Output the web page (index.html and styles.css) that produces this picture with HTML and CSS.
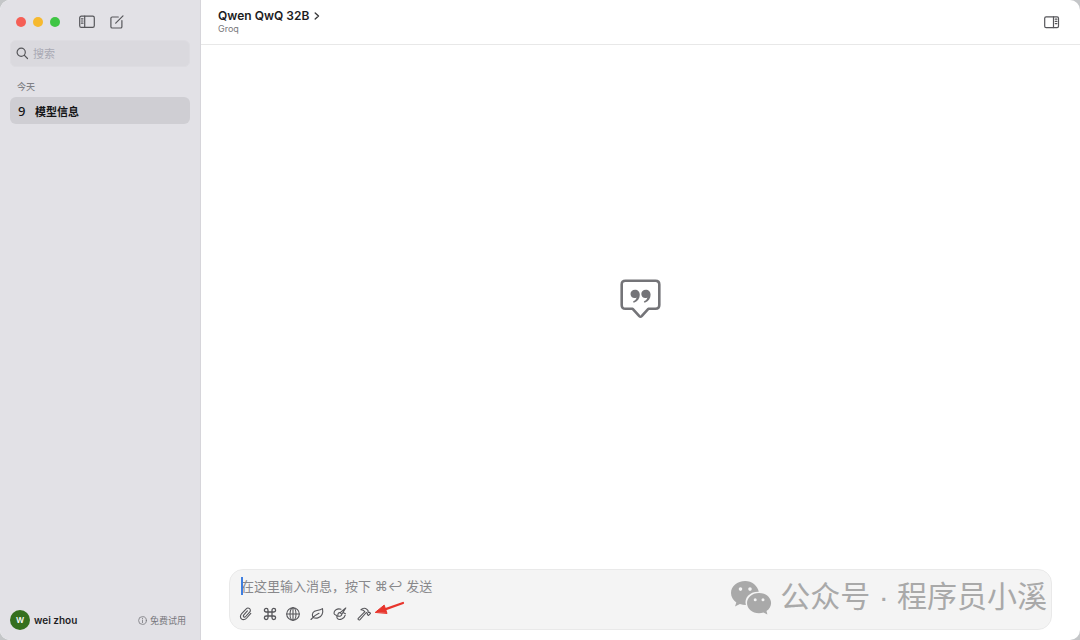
FILE: index.html
```html
<!DOCTYPE html>
<html lang="zh-CN">
<head>
    <meta charset="UTF-8">
    <meta name="viewport" content="width=device-width, initial-scale=1">
    <title>模型信息</title>
    <link rel="stylesheet" href="styles.css">
</head>
<body>
    <div class="window">
        <aside class="sidebar">
            <div class="titlebar">
                <div class="lights">
                    <button class="light red" aria-label="关闭"></button>
                    <button class="light yellow" aria-label="最小化"></button>
                    <button class="light green" aria-label="缩放"></button>
                </div>
                <button class="icon-btn" aria-label="边栏">
                    <svg width="16" height="14" viewBox="0 0 16 14">
                        <rect x="0.7" y="1.2" width="14.6" height="11.2" rx="1.6"/>
                        <path d="M5.7 1.2v11.2M2.4 3.8h1.6M2.4 6h1.6M2.4 8.2h1.6"/>
                    </svg>
                </button>
                <button class="icon-btn" aria-label="新建聊天">
                    <svg width="14" height="14" viewBox="0 0 14 14">
                        <path d="M8.3 2H2.2Q.9 2 .9 3.3v8.400Q.9 13 2.200 13h8.400q1.300 0 1.300-1.300V5.600"/>
                        <path d="M5.700 8.200L13 .9"/>
                    </svg>
                </button>
            </div>

            <label class="search">
                <svg width="13" height="13" viewBox="0 0 13 13">
                    <circle cx="5.2" cy="5.2" r="4.1"/>
                    <path d="M8.2 8.2l3.3 3.3"/>
                </svg>
                <input type="text" placeholder="搜索" aria-label="搜索">
            </label>

            <h2 class="group">今天</h2>
            <nav>
                <a class="chat" href="#"><span class="chat-icon">9</span>模型信息</a>
            </nav>

            <div class="account">
                <span class="avatar">W</span>
                <span class="user">wei zhou</span>
                <button class="trial">
                    <svg width="9" height="9" viewBox="0 0 9 9">
                        <circle cx="4.5" cy="4.5" r="3.9"/>
                        <path d="M4.5 4.1v2.5M4.5 2.2v.5"/>
                    </svg>
                    免费试用
                </button>
            </div>
        </aside>

        <main class="main">
            <header class="header">
                <button class="model">
                    <span class="model-name">Qwen QwQ 32B
                        <svg width="6" height="8" viewBox="0 0 6 8"><path d="M1.2 1l3.3 3-3.3 3"/></svg>
                    </span>
                    <span class="provider">Groq</span>
                </button>
                <button class="icon-btn" aria-label="检查器">
                    <svg width="16" height="14" viewBox="0 0 16 14">
                        <rect x="0.7" y="1.8" width="13.8" height="10.8" rx="1.4"/>
                        <path d="M9.500 1.800v10.800M11.300 4.200h1.600M11.300 6.400h1.600M11.300 8.600h1.600"/>
                    </svg>
                </button>
            </header>

            <section class="empty">
                <svg width="42" height="40" viewBox="0 0 42 40">
                    <path class="bubble" d="M5.500 1.700h30q3.800 0 3.800 3.800v20.500q0 3.800-3.800 3.800h-7.200l-6.600 7.300q-1.200 1.200-2.400 0l-6.600-7.300H5.500q-3.800 0-3.800-3.800V5.500q0-3.800 3.800-3.800z"/>
                    <path class="quote" d="M15 10.700c-2.600 0-4.500 1.800-4.500 4.200 0 2.300 1.800 4.100 4 4.100.8 0 1.500-.2 2.100-.6-.4 1.700-1.500 2.900-2.900 3.500-1.100.5-.6 1.900.7 1.500 3.400-1.100 5.400-4 5.400-7.600 0-3.100-2-5.100-4.800-5.100z"/>
                    <path class="quote" d="M25.800 10.700c-2.600 0-4.500 1.800-4.500 4.200 0 2.300 1.800 4.100 4 4.100.8 0 1.500-.2 2.100-.6-.4 1.700-1.500 2.900-2.900 3.500-1.100.5-.6 1.900.7 1.500 3.400-1.100 5.400-4 5.400-7.600 0-3.100-2-5.100-4.800-5.100z"/>
                </svg>
            </section>

            <form class="composer">
                <div class="field">
                    <input type="text" placeholder="在这里输入消息，按下 ⌘↩ 发送" aria-label="消息">
                </div>
                <div class="tools">
                    <button type="button" class="tool" aria-label="附件">
                        <svg width="14" height="14" viewBox="0 0 14 14"><path d="M11.800 6.300L7.700 11c-1.500 1.700-3.900 2.100-5.300.8-1.400-1.300-1.200-3.500.3-5.100L7 2.100c1-1.100 2.600-1.300 3.600-.4 1 .9 1 2.400 0 3.500L6.700 9.500c-.6.700-1.400.8-2 .3-.5-.5-.4-1.300.1-1.900l3.600-4"/></svg>
                    </button>
                    <button type="button" class="tool" aria-label="快捷指令">
                        <svg width="14" height="14" viewBox="0 0 14 14"><path class="bold" d="M5 5h4v4H5zM5 5H3.200A1.800 1.800 0 1 1 5 3.200zM9 5V3.200A1.800 1.800 0 1 1 10.800 5zM9 9h1.800A1.800 1.800 0 1 1 9 10.800zM5 9v1.800A1.800 1.800 0 1 1 3.200 9z"/></svg>
                    </button>
                    <button type="button" class="tool" aria-label="联网">
                        <svg width="14" height="14" viewBox="0 0 14 14"><circle cx="7" cy="7" r="6.300"/><ellipse cx="7" cy="7" rx="3" ry="6.300"/><path d="M.7 7h12.600M7 .7v12.600"/></svg>
                    </button>
                    <button type="button" class="tool" aria-label="思考">
                        <svg width="14" height="14" viewBox="0 0 14 14"><path d="M1 12.500l2.100-2.100C1.100 6.700 3.300 4 7 3.500c2.500-.3 3.800-.5 5.500-1.900.9 4.100-.6 8.400-4.600 9.300-2 .5-3.600.1-4.800-.5C4.600 8 6.700 7.300 9 6.200"/></svg>
                    </button>
                    <button type="button" class="tool" aria-label="绘图">
                        <svg width="14" height="14" viewBox="0 0 14 14"><path d="M8 2.200C4.100 1 .9 3.400 1 6.200c.1 1.800 1.800 1.500 2.500 2.100.9.800-.2 2.100 1 3.300 1.900 1.900 6.900.3 7.700-3.400M12.800 1L7.200 5.700l1.600 1.600zM7.200 5.700c-1.900-.3-2.600 1.300-2.300 3.400 1.900.3 4-.1 3.900-1.800M10.500 5.700l1.900 1"/></svg>
                    </button>
                    <button type="button" class="tool" aria-label="工具">
                        <svg width="14" height="14" viewBox="0 0 14 14"><path d="M4 2.700C5.900.7 8.300.8 9.900 2.400l1.200 1.300-.1 1.200.7.600 1-.1.800.9-2 2.200-1.100-1V6.400L9.300 5.500 3 12.600q-.8.800-1.600.1t.1-1.600L7.900 4.700C6.900 3.200 5.600 2.700 4 2.700z"/></svg>
                    </button>
                </div>
                <svg class="pointer" width="32" height="16" viewBox="0 0 32 16">
                    <path d="M29 2L11 8.400" />
                    <path class="head" d="M1.500 11.200L10.200 4.100l2.700 8z"/>
                </svg>
            </form>

            <div class="watermark">
                <svg width="42" height="34" viewBox="0 0 42 34">
                    <path fill-rule="evenodd" d="M15.200 1C7.300 1 1 6.300 1 13c0 3.800 2.100 7.200 5.300 9.400L5 26.600l4.900-2.500c1.900.6 3.800.8 6 .8-2-6.800 3.700-13.400 12.900-13.100C27.500 5.600 21.900 1 15.200 1zM10.500 7.300a1.800 1.800 0 1 1 0 3.600 1.800 1.800 0 0 1 0-3.600zM20 7.300a1.800 1.800 0 1 1 0 3.600 1.800 1.800 0 0 1 0-3.600z"/>
                    <path fill-rule="evenodd" d="M29 12.900c-6.800 0-12 4.500-12 10.100s5.200 10.200 12 10.200c1.600 0 3.100-.3 4.500-.7l3.900 2-.9-3.500c2.800-1.900 4.600-4.700 4.600-8 0-5.600-5.400-10.100-12.100-10.100zM25.200 18.200a1.500 1.500 0 1 1 0 3 1.500 1.500 0 0 1 0-3zM33 18.200a1.500 1.500 0 1 1 0 3 1.500 1.500 0 0 1 0-3z"/>
                </svg>
                <span>公众号 · 程序员小溪</span>
            </div>
        </main>
    </div>
</body>
</html>
```
FILE: styles.css
```css
:root {
    --sidebar: #e2e1e6;
    --icon: #56565a;
    --muted: #808085;
}

* {
    box-sizing: border-box;
}

body {
    margin: 0;
    background: #c4c6c8;
    color: #1d1d1f;
    font-family: Inter, "Noto Sans CJK SC", "DejaVu Sans", sans-serif;
    font-size: 11px;
}

button, input {
    padding: 0;
    border: 0;
    outline: 0;
    background: none;
    color: inherit;
    font: inherit;
}

svg {
    display: block;
    flex: none;
    fill: none;
    stroke: var(--icon);
    stroke-width: 1.2;
    stroke-linecap: round;
    stroke-linejoin: round;
}

.window {
    display: flex;
    height: 100vh;
    border-radius: 10px;
    overflow: hidden;
    background: #fff;
}

/* 侧边栏 */
.sidebar {
    display: flex;
    flex-direction: column;
    flex: none;
    width: 201px;
    padding: 0 10px;
    background: var(--sidebar);
    border-right: 1px solid #d6d5da;
}

.titlebar {
    display: flex;
    align-items: center;
    height: 40px;
    padding: 4px 0 0 6px;
    gap: 15px;
}

.lights {
    display: flex;
    gap: 7px;
    margin-right: 4px;
}

.light {
    width: 10px;
    height: 10px;
    border-radius: 50%;
}

.red { background: #f55f56; }
.yellow { background: #f6b92f; }
.green { background: #3fc544; }

.search {
    display: flex;
    align-items: center;
    gap: 4px;
    height: 27px;
    padding: 0 5px;
    border: 1px solid #dddce1;
    border-radius: 6px;
    background: #dad9de;
}

.search input {
    flex: 1;
    min-width: 0;
}

.search input::placeholder {
    color: #a9a9b4;
}

.group {
    margin: 13px 0 3px;
    padding-left: 7px;
    color: var(--muted);
    font-size: 9px;
    font-weight: 500;
    line-height: 14px;
}

.chat {
    display: flex;
    align-items: center;
    height: 27px;
    padding-left: 8px;
    border-radius: 6px;
    background: #cfced3;
    color: #151517;
    font-weight: 700;
    text-decoration: none;
}

.chat-icon {
    width: 17px;
    font-family: "Noto Sans", sans-serif;
    font-size: 13px;
    font-weight: 500;
}

.account {
    display: flex;
    align-items: center;
    margin: auto 0 10px;
}

.avatar {
    width: 20px;
    margin-right: 4px;
    border-radius: 50%;
    background: #35701f;
    color: #fff;
    font-size: 8px;
    font-weight: 600;
    line-height: 20px;
    text-align: center;
}

.user {
    font-size: 10px;
    font-weight: 600;
}

.trial {
    display: flex;
    align-items: center;
    gap: 3px;
    margin-left: auto;
    padding-right: 4px;
    color: #77777c;
    font-size: 9px;
}

.trial svg {
    stroke: #77777c;
    stroke-width: 0.8;
}

/* 聊天区 */
.main {
    position: relative;
    display: flex;
    flex-direction: column;
    flex: 1;
    min-width: 0;
}

.header {
    display: flex;
    align-items: center;
    justify-content: space-between;
    height: 45px;
    padding: 0 20px 1px 17px;
    border-bottom: 1px solid #e8e8e8;
}

.model {
    text-align: left;
}

.model-name {
    display: flex;
    align-items: center;
    gap: 5px;
    font-size: 12px;
    font-weight: 600;
    line-height: 14px;
}

.model-name svg {
    stroke: #3a3a3c;
    stroke-width: 1.4;
}

.provider {
    display: block;
    color: #77777b;
    font-size: 9px;
    line-height: 11px;
}

.empty {
    display: flex;
    align-items: center;
    justify-content: center;
    flex: 1;
    padding-bottom: 16px;
}

.bubble {
    stroke: #747478;
    stroke-width: 2.6;
}

.quote {
    fill: #747478;
    stroke: none;
}

.composer {
    position: relative;
    margin: 0 28px 10px;
    padding: 6px 9px 8px;
    border: 1px solid #e9e9e9;
    border-radius: 14px;
    background: #f4f4f4;
}

.field {
    position: relative;
    display: flex;
    height: 20px;
    padding-left: 2px;
}

/* 光标 */
.field::before {
    content: "";
    position: absolute;
    left: 2px;
    top: 1px;
    width: 2px;
    height: 18px;
    background: #3f7fe0;
}

.field input {
    flex: 1;
    min-width: 0;
    font-size: 13px;
}

.field input::placeholder {
    color: #88888b;
}

.tools {
    display: flex;
    justify-content: space-between;
    width: 132px;
    margin-top: 11px;
}

.tool svg {
    stroke-width: 1.1;
}

.tool .bold {
    stroke-width: 1.3;
}

.pointer {
    position: absolute;
    left: 144px;
    top: 31px;
    stroke: #e8352c;
    stroke-width: 2.2;
}

.pointer .head {
    fill: #e8352c;
    stroke-width: 1;
}

.watermark {
    position: absolute;
    right: 33px;
    bottom: 21px;
    display: flex;
    align-items: center;
    gap: 8px;
    color: #a9a9a9;
    font-family: "Liberation Sans", "Noto Sans CJK SC", sans-serif;
    font-size: 30px;
    line-height: 44px;
    pointer-events: none;
}

.watermark svg {
    overflow: visible;
    fill: #a9a9a9;
    stroke: none;
}
```
